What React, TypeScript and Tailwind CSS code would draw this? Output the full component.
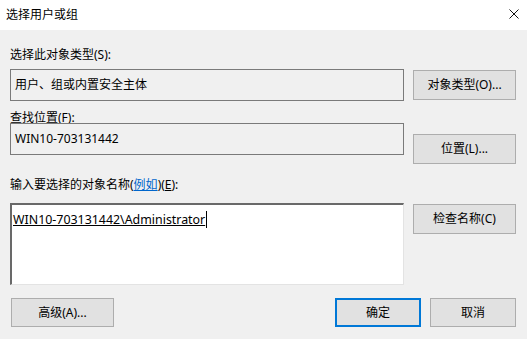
const font = "font-['Noto_Sans','Noto_Sans_CJK_SC',sans-serif]";

function Btn({ children, primary, className = "" }: { children: React.ReactNode; primary?: boolean; className?: string }) {
  return (
    <button
      type="button"
      className={`flex items-center justify-center bg-[#e1e1e1] text-[12px] text-black ${
        primary ? "border-2 border-[#0078d7]" : "border border-[#adadad]"
      } ${className}`}
    >
      {children}
    </button>
  );
}

export default function App() {
  return (
    <div className={`relative h-[339px] w-[527px] overflow-hidden bg-[#f0f0f0] ${font} text-[12px] text-black`}>
      {/* title bar */}
      <div className="flex h-[30px] items-center justify-between bg-white pl-[6px] pr-[8px]">
        <span className="text-[12px] leading-none">选择用户或组</span>
        <svg width="10" height="10" viewBox="0 0 10 10" className="mt-[-2px]">
          <path d="M0.5 0.5 L9.5 9.5 M9.5 0.5 L0.5 9.5" stroke="#111" strokeWidth="1" />
        </svg>
      </div>

      <div className="flex flex-col pl-[10px] pr-[11px]">
        <div className="mt-[18px] h-[14px] leading-[14px]">选择此对象类型(S):</div>
        <div className="mt-[7px] flex items-start justify-between">
          <div className="flex h-[32px] w-[394px] items-center border border-[#7a7a7a] pl-[4px] leading-none">
            用户、组或内置安全主体
          </div>
          <Btn className="mt-[1px] h-[30px] w-[103px]">对象类型(O)...</Btn>
        </div>

        <div className="mt-[11px] h-[12px] leading-[12px]">查找位置(F):</div>
        <div className="mt-[-1px] flex items-start justify-between">
          <div className="flex h-[32px] w-[394px] items-center border border-[#7a7a7a] pl-[4px] leading-none">
            WIN10-703131442
          </div>
          <Btn className="mt-[11px] h-[30px] w-[103px]">位置(L)...</Btn>
        </div>

        <div className="mt-[14px] h-[14px] leading-[14px]">
          输入要选择的对象名称(<span className="text-[#0066cc] underline">例如</span>)(<span className="underline">E</span>):
        </div>
        <div className="mt-[11px] flex items-start justify-between">
          <div className="h-[82px] w-[394px] border-b border-l-2 border-r border-t-2 border-b-[#e3e3e3] border-l-[#696969] border-r-[#e3e3e3] border-t-[#696969] bg-white pl-[1px] pt-[6px]">
            <span className="border-r border-black pr-[1px] text-[12.4px] underline leading-[16px]">WIN10-703131442\Administrator</span>
          </div>
          <Btn className="mt-[1px] h-[30px] w-[103px]">检查名称(C)</Btn>
        </div>

        <div className="mt-[13px] flex items-start">
          <Btn className="ml-[1px] h-[29px] w-[103px]">高级(A)...</Btn>
          <Btn primary className="ml-auto h-[29px] w-[86px]">确定</Btn>
          <Btn className="ml-[9px] h-[29px] w-[86px]">取消</Btn>
        </div>
      </div>
    </div>
  );
}
